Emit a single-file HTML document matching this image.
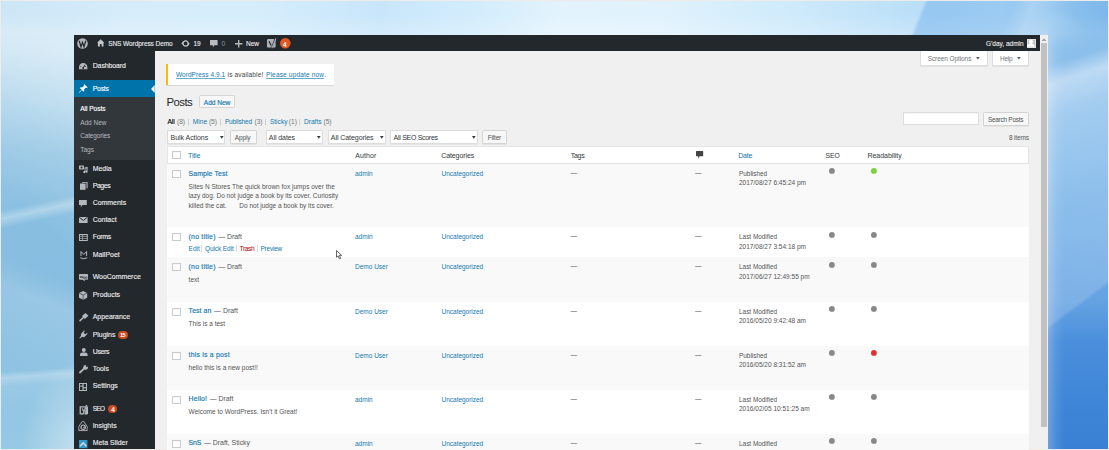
<!DOCTYPE html>
<html><head><meta charset="utf-8"><style>
html,body{margin:0;padding:0;}
body{width:1109px;height:450px;position:relative;overflow:hidden;font-family:"Liberation Sans",sans-serif;background:#efebe8;}
.t{position:absolute;white-space:pre;line-height:1;}
.r{position:absolute;box-sizing:border-box;}
#bg{left:1px;top:1px;width:1107px;height:448px;background:
 radial-gradient(40px 45px at 1052px 50px, rgba(255,255,255,.28), rgba(255,255,255,0)),
 linear-gradient(112deg, rgba(255,255,255,0) 0px, rgba(255,255,255,0) 940px, rgba(255,255,255,.22) 958px, rgba(255,255,255,.05) 985px, rgba(255,255,255,0) 1000px),
 linear-gradient(112deg, rgba(70,150,225,0) 0px, rgba(70,150,225,0) 856px, rgba(70,150,225,.3) 860px, rgba(70,150,225,.3) 1109px),
 linear-gradient(180deg, rgba(255,255,255,0) 0px, rgba(255,255,255,0) 12px, rgba(255,255,255,.2) 32px, rgba(255,255,255,0) 55px),
 linear-gradient(90deg,#cde6f6 0px,#d0e8f8 60px,#d6ecfa 120px,#d6edfb 250px,#c8e6fb 380px,#d2ecfc 470px,#e2f3fd 560px,#e0f2fd 660px,#d0ebfb 780px,#c0e2f9 880px,#b8ddf8 930px,#c0e1f9 1000px,#b0d8f5 1050px,#94c6ee 1109px);}
#bgL{left:1px;top:1px;width:73px;height:448px;-webkit-mask-image:linear-gradient(180deg, transparent 0px, transparent 22px, #000 48px);background:
 linear-gradient(168deg, rgba(255,255,255,0) 0px, rgba(255,255,255,0) 205px, rgba(255,255,255,.32) 213px, rgba(255,255,255,0) 223px),
 linear-gradient(176deg, rgba(255,255,255,0) 0px, rgba(255,255,255,0) 370px, rgba(255,255,255,.28) 376px, rgba(255,255,255,.08) 385px, rgba(255,255,255,0) 413px),
 radial-gradient(60px 90px at 80px 448px, rgba(255,255,255,.45), rgba(255,255,255,0)),
 linear-gradient(200deg, rgba(255,255,255,0) 0px, rgba(255,255,255,0) 263px, rgba(255,255,255,.14) 293px, rgba(255,255,255,0) 363px),
 linear-gradient(180deg,#d3e9f7 0px,#d0e7f5 33px,#b4d8ed 93px,#98c8e5 153px,#88bfe1 213px,#86bde0 283px,#8dc2e2 353px,#96c9e4 448px);}
#bgL2{left:1px;top:22px;width:73px;height:427px;background:linear-gradient(225deg, rgba(255,255,255,.4) 0px, rgba(255,255,255,.12) 100px, rgba(255,255,255,0) 170px);-webkit-mask-image:linear-gradient(180deg, transparent 0px, #000 30px);}
#bgR{left:1048px;top:1px;width:60px;height:448px;-webkit-mask-image:linear-gradient(180deg, rgba(0,0,0,.0) 0px, rgba(0,0,0,.0) 18px, #000 50px);background:
 linear-gradient(90deg, rgba(255,255,255,.25) 0px, rgba(255,255,255,.08) 8px, rgba(255,255,255,0) 16px),
 linear-gradient(162deg, rgba(255,255,255,0) 0px, rgba(255,255,255,0) 62px, rgba(255,255,255,.42) 80px, rgba(255,255,255,.18) 112px, rgba(255,255,255,.08) 150px, rgba(255,255,255,0) 200px),
 linear-gradient(143deg, rgba(255,255,255,.10) 0px, rgba(255,255,255,.16) 259px, rgba(255,255,255,0) 263px),
 linear-gradient(180deg,#7ab4e8 0px,#7db7e9 40px,#80b9ea 150px,#74afe7 230px,#64a2e2 300px,#4b8fdc 340px,#3f86d8 400px,#3a81d5 448px);}
</style></head><body>
<div class="r" id="bg"></div><div class="r" id="bgL"></div><div class="r" id="bgR"></div><div class="r" id="bgL2"></div>
<div class="r" style="left:74.00px;top:35.00px;width:966.00px;height:413.70px;background:#f0f0f0"></div>
<div class="r" style="left:1040.00px;top:35.00px;width:8.00px;height:413.70px;background:#f0f0f0"></div>
<div class="r" style="left:1041.20px;top:43.00px;width:5.60px;height:383.70px;background:#c1c1c1"></div>
<svg class="r" style="left:1040px;top:36px" width="8" height="7"><path d="M1.5 5 L4 2.3 L6.5 5 Z" fill="#a3a3a3"/></svg>
<div class="r" style="left:74.00px;top:35.00px;width:966.00px;height:15.70px;background:#23282d"></div>
<div class="r" style="left:74.00px;top:50.70px;width:80.70px;height:398.00px;background:#23282d"></div>
<svg class="r" style="left:77.00px;top:37.60px;overflow:visible" width="11" height="11" viewBox="0 0 11 11"><circle cx="5.5" cy="5.5" r="5.3" fill="#b3b7bb"/><path d="M2.2 2.8 L4.0 8.7 L5.5 4.4 L7.0 8.7 L8.8 2.8" fill="none" stroke="#23282d" stroke-width="1.2"/></svg>
<svg class="r" style="left:96.60px;top:39.30px;overflow:visible" width="7.4" height="7.6" viewBox="0 0 7.4 7.6"><path d="M3.7 0.3 L7.4 3.8 L6.5 3.8 L6.5 7.6 L4.5 7.6 L4.5 5.2 L2.9 5.2 L2.9 7.6 L0.9 7.6 L0.9 3.8 L0 3.8 Z" fill="#c3c7cb"/><rect x="3.1" y="5" width="1.2" height="2.6" fill="#23282d"/></svg>
<div class="t" style="left:108.20px;top:40.80px;font-size:6.500px;color:#eeeeee;letter-spacing:-0.066px;-webkit-text-stroke:0.1px #eee;">SNS Wordpress Demo</div>
<svg class="r" style="left:181.00px;top:40.30px;overflow:visible" width="9.2" height="7" viewBox="0 0 9.2 7"><circle cx="4.6" cy="3.5" r="2.6" fill="none" stroke="#c3c7cb" stroke-width="1.3"/><path d="M0.4 3.5 L2 1.6 L2.2 4.6Z M8.8 3.5 L7.2 5.4 L7 2.4Z" fill="#c3c7cb"/></svg>
<div class="t" style="left:193.50px;top:40.80px;font-size:6.500px;color:#eeeeee;letter-spacing:-0.230px;-webkit-text-stroke:0.1px #eee;">19</div>
<svg class="r" style="left:209.70px;top:40.20px;overflow:visible" width="7.6" height="7.4" viewBox="0 0 7.6 7.4"><path d="M0 0.3 Q0 0 0.3 0 L7.3 0 Q7.6 0 7.6 0.3 L7.6 4.9 Q7.6 5.2 7.3 5.2 L4.3 5.2 L2.9 7.4 L2.8 5.2 L0.3 5.2 Q0 5.2 0 4.9Z" fill="#b9bdc1"/></svg>
<div class="t" style="left:221.60px;top:40.80px;font-size:6.500px;color:#8f9499;">0</div>
<svg class="r" style="left:234.60px;top:40.40px;overflow:visible" width="7.4" height="7.4" viewBox="0 0 7.4 7.4"><path d="M3 0 H4.4 V3 H7.4 V4.4 H4.4 V7.4 H3 V4.4 H0 V3 H3Z" fill="#b3b8bd"/></svg>
<div class="t" style="left:246.00px;top:40.80px;font-size:6.500px;color:#eeeeee;-webkit-text-stroke:0.1px #eee;">New</div>
<svg class="r" style="left:267.00px;top:37.80px;overflow:visible" width="9.4" height="10.4" viewBox="0 0 9.4 10.4"><rect x="0" y="1" width="8.6" height="8.6" rx="1.2" fill="#aeb2b6"/><path d="M2 3.2 L4.1 7.6 M8.4 0.2 L4.4 10.2" stroke="#23282d" stroke-width="1.2" fill="none"/><path d="M8.6 0 L9.4 0.4 L5.2 10.4 L4.4 10" fill="#aeb2b6"/></svg>
<svg class="r" style="left:279.60px;top:38.20px;overflow:visible" width="10.6" height="10.6" viewBox="0 0 10.6 10.6"><circle cx="5.3" cy="5.3" r="5.3" fill="#e2571f"/></svg>
<div class="t" style="left:283.10px;top:41.97px;font-size:6.300px;color:#ffffff;font-weight:700;">4</div>
<div class="t" style="left:985.90px;top:40.80px;font-size:6.500px;color:#eeeeee;letter-spacing:-0.010px;-webkit-text-stroke:0.1px #eee;">G’day, admin</div>
<div class="r" style="left:1026.70px;top:38.70px;width:9.30px;height:9.10px;background:#c2c4c6;border:0.8px solid #e2e2e2"></div>
<svg class="r" style="left:1027.40px;top:39.40px;overflow:visible" width="7.9" height="7.7" viewBox="0 0 7.9 7.7"><circle cx="3.95" cy="2.8" r="2.1" fill="#fff"/><path d="M0.3 7.7 Q0.5 4.6 3.95 4.5 Q7.4 4.6 7.6 7.7Z" fill="#fff"/></svg>
<div class="t" style="left:92.70px;top:63.17px;font-size:6.950px;color:#eeeeee;letter-spacing:-0.088px;-webkit-text-stroke:0.12px #eeeeee;">Dashboard</div>
<svg class="r" style="left:79.00px;top:62.90px;overflow:visible" width="8.4" height="6.2" viewBox="0 0 8.4 6.2"><path d="M4.2 0 A4.2 4.2 0 0 1 8.4 4.2 L8.4 6.2 L0 6.2 L0 4.2 A4.2 4.2 0 0 1 4.2 0Z" fill="#b3b8bd"/><path d="M4.2 5 L6 1.8" stroke="#23282d" stroke-width="1"/><circle cx="4.2" cy="5" r="1" fill="#23282d"/><circle cx="1.8" cy="3.6" r=".5" fill="#23282d"/><circle cx="6.6" cy="3.6" r=".5" fill="#23282d"/></svg>
<div class="r" style="left:74.00px;top:80.10px;width:80.70px;height:17.10px;background:#0073aa"></div>
<svg class="r" style="left:151.10px;top:84.70px;overflow:visible" width="3.7" height="8" viewBox="0 0 3.7 8"><path d="M3.7 0 L0 4 L3.7 8Z" fill="#f1f1f1"/></svg>
<div class="t" style="left:92.70px;top:86.17px;font-size:6.950px;color:#ffffff;letter-spacing:-0.270px;-webkit-text-stroke:0.12px #ffffff;">Posts</div>
<svg class="r" style="left:78.70px;top:84.30px;overflow:visible" width="8.6" height="8.7" viewBox="0 0 8.6 8.7"><path d="M5.2 0 L8.6 3.4 L7.6 3.9 L6.9 3.5 L5 5.4 L5.3 7 L4.6 7.7 L2.9 6 L0.5 8.7 L0 8.2 L2.6 5.7 L0.9 4 L1.6 3.3 L3.2 3.6 L5.1 1.7 L4.7 1Z" fill="#ffffff"/></svg>
<div class="r" style="left:74.00px;top:97.20px;width:80.70px;height:62.80px;background:#32373c"></div>
<div class="t" style="left:80.20px;top:106.11px;font-size:6.600px;color:#ffffff;letter-spacing:-0.047px;-webkit-text-stroke:0.16px #ffffff;">All Posts</div>
<div class="t" style="left:80.20px;top:119.80px;font-size:6.500px;color:#b4b9be;letter-spacing:-0.012px;">Add New</div>
<div class="t" style="left:80.20px;top:133.10px;font-size:6.500px;color:#b4b9be;letter-spacing:-0.148px;">Categories</div>
<div class="t" style="left:80.20px;top:146.76px;font-size:6.550px;color:#b4b9be;">Tags</div>
<div class="t" style="left:92.70px;top:165.67px;font-size:6.950px;color:#eeeeee;-webkit-text-stroke:0.12px #eeeeee;">Media</div>
<svg class="r" style="left:79.00px;top:165.20px;overflow:visible" width="8.6" height="7.8" viewBox="0 0 8.6 7.8"><rect x="0" y="0.4" width="5" height="4" rx=".6" fill="#b3b8bd"/><circle cx="2.5" cy="2.4" r="1" fill="#23282d"/><path d="M5.6 2.5 L8.6 1.8 L8.6 6.6 A1.1 1.1 0 1 1 7.6 5.6 L7.6 3.4 L6.4 3.7 L6.4 7 A1.1 1.1 0 1 1 5.6 6" fill="#b3b8bd"/></svg>
<div class="t" style="left:92.70px;top:182.84px;font-size:6.950px;color:#eeeeee;letter-spacing:-0.402px;-webkit-text-stroke:0.12px #eeeeee;">Pages</div>
<svg class="r" style="left:79.50px;top:182.27px;overflow:visible" width="7.6" height="7.8" viewBox="0 0 7.6 7.8"><rect x="2" y="0" width="5.6" height="6.3" fill="#b3b8bd"/><rect x="0.9" y="0.8" width="5.6" height="6.3" fill="#23282d"/><rect x="0" y="1.5" width="5.6" height="6.3" fill="#b3b8bd"/></svg>
<div class="t" style="left:92.70px;top:200.01px;font-size:6.950px;color:#eeeeee;-webkit-text-stroke:0.12px #eeeeee;">Comments</div>
<svg class="r" style="left:79.40px;top:199.54px;overflow:visible" width="7.8" height="7.6" viewBox="0 0 7.8 7.6"><path d="M0 0 H7.8 V5 H3.4 L1.8 7.6 L1.9 5 H0Z" fill="#b3b8bd"/></svg>
<div class="t" style="left:92.70px;top:217.18px;font-size:6.950px;color:#eeeeee;-webkit-text-stroke:0.12px #eeeeee;">Contact</div>
<svg class="r" style="left:79.00px;top:217.41px;overflow:visible" width="8.6" height="6" viewBox="0 0 8.6 6"><rect x="0" y="0" width="8.6" height="6" fill="#b3b8bd"/><path d="M0.3 0.4 L4.3 3.4 L8.3 0.4" fill="none" stroke="#23282d" stroke-width=".9"/></svg>
<div class="t" style="left:92.70px;top:234.35px;font-size:6.950px;color:#eeeeee;letter-spacing:-0.272px;-webkit-text-stroke:0.12px #eeeeee;">Forms</div>
<svg class="r" style="left:79.00px;top:234.18px;overflow:visible" width="8.8" height="7" viewBox="0 0 8.8 7"><rect x="0" y="0" width="8.8" height="7" fill="#b3b8bd"/><rect x="1" y="1.2" width="2.2" height="1.2" fill="#23282d"/><rect x="3.8" y="1.2" width="4" height="1.2" fill="#23282d"/><rect x="1" y="3" width="2.2" height="1.2" fill="#23282d"/><rect x="3.8" y="3" width="4" height="1.2" fill="#23282d"/><rect x="1" y="4.8" width="2.2" height="1.2" fill="#23282d"/><rect x="3.8" y="4.8" width="4" height="1.2" fill="#23282d"/></svg>
<div class="t" style="left:92.70px;top:251.52px;font-size:6.950px;color:#eeeeee;-webkit-text-stroke:0.12px #eeeeee;">MailPoet</div>
<svg class="r" style="left:79.60px;top:250.75px;overflow:visible" width="7.6" height="8.6" viewBox="0 0 7.6 8.6"><path d="M1 5 V0.5 L3.8 3.5 L6.6 0.5 V5" fill="none" stroke="#b3b8bd" stroke-width="1"/><path d="M0.3 6.8 Q3.8 8.8 7.3 6.8" fill="none" stroke="#b3b8bd" stroke-width="1"/></svg>
<div class="t" style="left:92.70px;top:274.39px;font-size:6.950px;color:#eeeeee;-webkit-text-stroke:0.12px #eeeeee;">WooCommerce</div>
<svg class="r" style="left:79.00px;top:273.82px;overflow:visible" width="9" height="7.6" viewBox="0 0 9 7.6"><path d="M0.8 0 H8.2 Q9 0 9 0.8 V5 Q9 5.8 8.2 5.8 H5.4 L6 7.6 L3.6 5.8 H0.8 Q0 5.8 0 5 V0.8 Q0 0 0.8 0Z" fill="#b3b8bd"/><path d="M1.2 2 L1.8 4 L2.6 2.4 L3.4 4 L4 2 M5.2 3 A.8 .9 0 1 0 5.21 3 M7.3 3 A.8 .9 0 1 0 7.31 3" fill="none" stroke="#23282d" stroke-width=".6"/></svg>
<div class="t" style="left:92.70px;top:291.56px;font-size:6.950px;color:#eeeeee;-webkit-text-stroke:0.12px #eeeeee;">Products</div>
<svg class="r" style="left:79.40px;top:290.59px;overflow:visible" width="8.2" height="8.8" viewBox="0 0 8.2 8.8"><path d="M4.1 0 L8.2 2 L8.2 6.8 L4.1 8.8 L0 6.8 L0 2Z" fill="#b3b8bd"/><path d="M0 2 L4.1 4 L8.2 2 M4.1 4 V8.8" fill="none" stroke="#23282d" stroke-width=".6"/></svg>
<div class="t" style="left:92.70px;top:314.43px;font-size:6.950px;color:#eeeeee;-webkit-text-stroke:0.12px #eeeeee;">Appearance</div>
<svg class="r" style="left:79.00px;top:313.16px;overflow:visible" width="9.4" height="8.6" viewBox="0 0 9.4 8.6"><path d="M2.9 3.0 L6.5 0 L9.4 2.7 L5.9 5.9Z" fill="#b3b8bd"/><path d="M4.9 4.0 L1.0 7.7" stroke="#b3b8bd" stroke-width="1.6" stroke-linecap="round"/></svg>
<div class="t" style="left:92.70px;top:331.60px;font-size:6.950px;color:#eeeeee;-webkit-text-stroke:0.12px #eeeeee;">Plugins</div>
<svg class="r" style="left:79.20px;top:330.33px;overflow:visible" width="9" height="9" viewBox="0 0 9 9"><path d="M5.2 1.0 L3.8 2.6 M8.0 3.6 L6.4 5.0" stroke="#b3b8bd" stroke-width="1.1" stroke-linecap="round"/><path d="M2.6 3.2 L3.9 2.0 L7.2 5.3 L6.0 6.6 Q4.6 7.6 3.2 6.8 L1.0 8.6 L0.3 7.9 L2.0 5.7 Q1.4 4.4 2.6 3.2Z" fill="#b3b8bd"/></svg>
<div class="t" style="left:92.70px;top:348.77px;font-size:6.950px;color:#eeeeee;letter-spacing:-0.312px;-webkit-text-stroke:0.12px #eeeeee;">Users</div>
<svg class="r" style="left:79.60px;top:347.90px;overflow:visible" width="7.6" height="8" viewBox="0 0 7.6 8"><circle cx="3.8" cy="2" r="2" fill="#b3b8bd"/><path d="M0 8 V6.6 Q0 4.4 2.6 4.4 H5 Q7.6 4.4 7.6 6.6 V8Z" fill="#b3b8bd"/></svg>
<div class="t" style="left:92.70px;top:365.94px;font-size:6.950px;color:#eeeeee;-webkit-text-stroke:0.12px #eeeeee;">Tools</div>
<svg class="r" style="left:79.00px;top:364.87px;overflow:visible" width="9.4" height="8.6" viewBox="0 0 9.4 8.6"><path d="M0.9 7.5 L5.6 3.2" stroke="#b3b8bd" stroke-width="1.8" stroke-linecap="round"/><circle cx="6.6" cy="2.4" r="2.4" fill="#b3b8bd"/><circle cx="7.9" cy="1.0" r="1.1" fill="#23282d"/></svg>
<div class="t" style="left:92.70px;top:383.11px;font-size:6.950px;color:#eeeeee;-webkit-text-stroke:0.12px #eeeeee;">Settings</div>
<svg class="r" style="left:79.40px;top:382.64px;overflow:visible" width="8" height="8" viewBox="0 0 8 8"><rect x="0" y="0" width="8" height="8" fill="#b3b8bd"/><rect x="1" y="1" width="2.4" height="1.6" fill="#23282d"/><rect x="1" y="3.6" width="2.4" height="3.4" fill="#23282d"/><rect x="4.6" y="1" width="2.4" height="3.2" fill="#23282d"/><rect x="4.6" y="5.4" width="2.4" height="1.6" fill="#23282d"/></svg>
<div class="t" style="left:92.70px;top:406.37px;font-size:6.487px;color:#eeeeee;letter-spacing:-0.600px;-webkit-text-stroke:0.12px #eeeeee;">SEO</div>
<svg class="r" style="left:79.00px;top:404.71px;overflow:visible" width="9" height="9.4" viewBox="0 0 9 9.4"><path d="M0.6 1.2 H6.4 L5.8 2.5 H1.9 V8.2 H4.2 L3.7 9.4 H0.6 Z" fill="#b3b8bd"/><path d="M7.5 1.4 H9 V8.2 Q9 9.4 7.8 9.4 H5.3 Z" fill="#b3b8bd"/><path d="M6.9 0 L8.4 0 L4.5 9.4 L3.1 9.4 Z" fill="#b3b8bd"/><path d="M2.7 3.3 L3.9 3.3 L4.9 5.8 L4.2 7.3Z" fill="#b3b8bd"/></svg>
<div class="t" style="left:92.70px;top:423.15px;font-size:6.950px;color:#eeeeee;-webkit-text-stroke:0.12px #eeeeee;">Insights</div>
<svg class="r" style="left:78.40px;top:420.88px;overflow:visible" width="10" height="10.2" viewBox="0 0 10 10.2"><path d="M4.2 0.6 L1.0 5.2 Q0.2 6.8 1.0 8.0 L0.8 9.6 L9.2 9.6 L9.0 8.0 Q9.8 6.6 8.8 5.0 L5.8 0.6 Q5 0 4.2 0.6Z" fill="none" stroke="#b3b8bd" stroke-width="0.9"/><circle cx="5.2" cy="6.2" r="2.2" fill="none" stroke="#b3b8bd" stroke-width="1.2"/><path d="M5.2 6.2 H7.2" stroke="#b3b8bd" stroke-width="1"/></svg>
<div class="t" style="left:92.70px;top:440.32px;font-size:6.950px;color:#eeeeee;-webkit-text-stroke:0.12px #eeeeee;">Meta Slider</div>
<svg class="r" style="left:79.20px;top:439.75px;overflow:visible" width="8.4" height="8.2" viewBox="0 0 8.4 8.2"><rect x="0" y="0" width="8.4" height="8.2" fill="#3597c6"/><path d="M1.0 6.2 L4.2 2.9 L7.4 6.2" fill="none" stroke="#c9dbe6" stroke-width="1.5"/></svg>
<div class="r" style="left:117.80px;top:330.60px;width:10.60px;height:8.80px;background:#ca4a1f;border-radius:5px"></div>
<div class="t" style="left:120.00px;top:333.21px;font-size:5.664px;color:#fff;letter-spacing:-0.600px;font-weight:700;">15</div>
<div class="r" style="left:108.40px;top:405.10px;width:8.50px;height:8.20px;background:#ca4a1f;border-radius:5px"></div>
<div class="t" style="left:111.20px;top:406.80px;font-size:6.500px;color:#fff;font-weight:700;">4</div>
<div class="r" style="left:919.60px;top:50.70px;width:68.00px;height:15.30px;background:#fff;border:0.5px solid #ddd;border-top:0;box-shadow:0 0.5px 0.5px rgba(0,0,0,.05)"></div>
<div class="t" style="left:927.70px;top:56.00px;font-size:6.500px;color:#72777c;letter-spacing:-0.085px;">Screen Options</div>
<svg class="r" style="left:976.20px;top:57.20px;overflow:visible" width="3.8" height="2.6" viewBox="0 0 3.8 2.6"><path d="M0 0 H3.8 L1.9 2.6Z" fill="#555d66"/></svg>
<div class="r" style="left:991.50px;top:50.70px;width:37.70px;height:15.30px;background:#fff;border:0.5px solid #ddd;border-top:0;box-shadow:0 0.5px 0.5px rgba(0,0,0,.05)"></div>
<div class="t" style="left:1000.00px;top:56.00px;font-size:6.500px;color:#72777c;letter-spacing:-0.289px;">Help</div>
<svg class="r" style="left:1017.40px;top:57.20px;overflow:visible" width="3.8" height="2.6" viewBox="0 0 3.8 2.6"><path d="M0 0 H3.8 L1.9 2.6Z" fill="#555d66"/></svg>
<div class="r" style="left:166.10px;top:63.90px;width:167.90px;height:21.10px;background:#fff;border-left:2px solid #ffb900;box-shadow:0 0.5px 0.5px rgba(0,0,0,.1)"></div>
<div class="t" style="left:175.90px;top:71.70px;font-size:6.500px;color:#1479b0;letter-spacing:0.072px;text-decoration:underline;text-decoration-thickness:0.6px;text-underline-offset:0.5px;text-decoration-skip-ink:none;text-decoration-color:rgba(0,115,170,.6);">WordPress 4.9.1</div>
<div class="t" style="left:227.60px;top:71.70px;font-size:6.500px;color:#444;letter-spacing:0.136px;">is available!</div>
<div class="t" style="left:266.00px;top:71.70px;font-size:6.500px;color:#1479b0;letter-spacing:0.169px;text-decoration:underline;text-decoration-thickness:0.6px;text-underline-offset:0.5px;text-decoration-skip-ink:none;text-decoration-color:rgba(0,115,170,.6);">Please update now</div>
<div class="t" style="left:324.60px;top:71.61px;font-size:6.600px;color:#444;">.</div>
<div class="t" style="left:166.60px;top:97.05px;font-size:11.396px;color:#23282d;letter-spacing:-0.600px;">Posts</div>
<div class="r" style="left:199.20px;top:95.20px;width:36.30px;height:13.20px;background:#f7f7f7;border:0.6px solid #d5d5d5;border-radius:1.5px"></div>
<div class="t" style="left:203.80px;top:99.71px;font-size:6.600px;color:#1479b0;letter-spacing:-0.030px;-webkit-text-stroke:0.16px #1479b0;">Add New</div>
<div class="t" style="left:167.40px;top:118.83px;font-size:6.700px;color:#000;-webkit-text-stroke:0.16px #000;">All</div>
<div class="t" style="left:177.00px;top:118.91px;font-size:6.600px;color:#72777c;">(8)</div>
<div class="r" style="left:187.70px;top:118.60px;width:0.65px;height:6.80px;background:#cfcfcf"></div>
<div class="r" style="left:219.70px;top:118.60px;width:0.65px;height:6.80px;background:#cfcfcf"></div>
<div class="r" style="left:265.10px;top:118.60px;width:0.65px;height:6.80px;background:#cfcfcf"></div>
<div class="r" style="left:299.20px;top:118.60px;width:0.65px;height:6.80px;background:#cfcfcf"></div>
<div class="t" style="left:192.80px;top:118.91px;font-size:6.600px;color:#1479b0;">Mine</div>
<div class="t" style="left:208.90px;top:118.91px;font-size:6.600px;color:#72777c;">(5)</div>
<div class="t" style="left:224.90px;top:119.00px;font-size:6.500px;color:#1479b0;letter-spacing:-0.181px;">Published</div>
<div class="t" style="left:254.50px;top:118.91px;font-size:6.600px;color:#72777c;">(3)</div>
<div class="t" style="left:269.90px;top:118.91px;font-size:6.600px;color:#1479b0;">Sticky</div>
<div class="t" style="left:288.80px;top:118.91px;font-size:6.600px;color:#72777c;">(1)</div>
<div class="t" style="left:304.00px;top:118.91px;font-size:6.600px;color:#1479b0;">Drafts</div>
<div class="t" style="left:323.50px;top:118.91px;font-size:6.600px;color:#72777c;">(5)</div>
<div class="r" style="left:902.80px;top:111.90px;width:76.40px;height:13.40px;background:#fff;border:0.5px solid #ddd;box-shadow:inset 0 0.5px 1px rgba(0,0,0,.07)"></div>
<div class="r" style="left:982.50px;top:111.60px;width:46.90px;height:14.20px;background:#f7f7f7;border:0.6px solid #d4d4d4;border-radius:1.5px;box-shadow:0 0.5px 0 #d8d8d8"></div>
<div class="t" style="left:987.90px;top:116.80px;font-size:6.500px;color:#555;letter-spacing:-0.278px;">Search Posts</div>
<div class="t" style="left:1008.90px;top:134.80px;font-size:6.500px;color:#555;letter-spacing:-0.158px;">8 items</div>
<div class="r" style="left:167.30px;top:130.30px;width:58.00px;height:13.30px;background:#fff;border:0.5px solid #ddd;box-shadow:0 0.5px 0.5px rgba(0,0,0,.04)"></div>
<div class="t" style="left:170.60px;top:134.17px;font-size:7.000px;color:#32373c;letter-spacing:-0.048px;">Bulk Actions</div>
<svg class="r" style="left:219.60px;top:135.60px;overflow:visible" width="3.6" height="2.8" viewBox="0 0 3.6 2.8"><path d="M0 0 H3.6 L1.8 2.8Z" fill="#32373c"/></svg>
<div class="r" style="left:229.50px;top:130.30px;width:27.10px;height:13.70px;background:#f7f7f7;border:0.6px solid #d4d4d4;border-radius:1.5px;box-shadow:0 0.5px 0 #d8d8d8"></div>
<div class="t" style="left:234.70px;top:134.80px;font-size:6.500px;color:#555;letter-spacing:-0.115px;">Apply</div>
<div class="r" style="left:265.50px;top:130.30px;width:57.60px;height:13.30px;background:#fff;border:0.5px solid #ddd;box-shadow:0 0.5px 0.5px rgba(0,0,0,.04)"></div>
<div class="t" style="left:268.80px;top:134.17px;font-size:7.000px;color:#32373c;letter-spacing:-0.069px;">All dates</div>
<svg class="r" style="left:317.20px;top:135.60px;overflow:visible" width="3.6" height="2.8" viewBox="0 0 3.6 2.8"><path d="M0 0 H3.6 L1.8 2.8Z" fill="#32373c"/></svg>
<div class="r" style="left:327.60px;top:130.30px;width:58.80px;height:13.30px;background:#fff;border:0.5px solid #ddd;box-shadow:0 0.5px 0.5px rgba(0,0,0,.04)"></div>
<div class="t" style="left:330.80px;top:134.17px;font-size:7.000px;color:#32373c;letter-spacing:-0.060px;">All Categories</div>
<svg class="r" style="left:380.10px;top:135.60px;overflow:visible" width="3.6" height="2.8" viewBox="0 0 3.6 2.8"><path d="M0 0 H3.6 L1.8 2.8Z" fill="#32373c"/></svg>
<div class="r" style="left:390.30px;top:130.30px;width:88.00px;height:13.30px;background:#fff;border:0.5px solid #ddd;box-shadow:0 0.5px 0.5px rgba(0,0,0,.04)"></div>
<div class="t" style="left:393.60px;top:134.17px;font-size:7.000px;color:#32373c;letter-spacing:-0.295px;">All SEO Scores</div>
<svg class="r" style="left:472.40px;top:135.60px;overflow:visible" width="3.6" height="2.8" viewBox="0 0 3.6 2.8"><path d="M0 0 H3.6 L1.8 2.8Z" fill="#32373c"/></svg>
<div class="r" style="left:482.00px;top:130.30px;width:24.70px;height:13.70px;background:#f7f7f7;border:0.6px solid #d4d4d4;border-radius:1.5px;box-shadow:0 0.5px 0 #d8d8d8"></div>
<div class="t" style="left:487.70px;top:134.80px;font-size:6.500px;color:#555;letter-spacing:-0.169px;">Filter</div>
<div class="r" style="left:166.70px;top:145.80px;width:862.70px;height:314.20px;background:#fff;border:0.6px solid #e5e5e5;box-shadow:0 0.5px 0.5px rgba(0,0,0,.04)"></div>
<div class="r" style="left:167.30px;top:162.90px;width:861.50px;height:0.90px;background:#e1e1e1"></div>
<div class="r" style="left:172.20px;top:151.20px;width:8.60px;height:8.30px;background:#fff;border:0.8px solid #c9cccf;box-shadow:inset 0 0.5px 1px rgba(0,0,0,.06)"></div>
<div class="t" style="left:188.00px;top:151.77px;font-size:7.000px;color:#1479b0;letter-spacing:-0.141px;">Title</div>
<div class="t" style="left:355.20px;top:151.77px;font-size:7.000px;color:#32373c;letter-spacing:0.095px;">Author</div>
<div class="t" style="left:441.20px;top:151.77px;font-size:7.000px;color:#32373c;letter-spacing:-0.095px;">Categories</div>
<div class="t" style="left:570.80px;top:151.77px;font-size:7.000px;color:#32373c;letter-spacing:-0.295px;">Tags</div>
<svg class="r" style="left:695.60px;top:151.20px;overflow:visible" width="7.2" height="7.8" viewBox="0 0 7.2 7.8"><path d="M0 0.4 Q0 0 .4 0 H6.8 Q7.2 0 7.2 .4 V4.8 Q7.2 5.2 6.8 5.2 H3.6 L2.4 7.8 L2.2 5.2 H.4 Q0 5.2 0 4.8Z" fill="#444"/></svg>
<div class="t" style="left:738.20px;top:151.77px;font-size:7.000px;color:#1479b0;letter-spacing:-0.162px;">Date</div>
<div class="t" style="left:825.50px;top:152.59px;font-size:6.750px;color:#32373c;">SEO</div>
<div class="t" style="left:867.50px;top:151.77px;font-size:7.000px;color:#32373c;letter-spacing:-0.043px;">Readability</div>
<div class="r" style="left:167.30px;top:163.80px;width:861.50px;height:63.30px;background:#f9f9f9"></div>
<div class="r" style="left:167.30px;top:227.10px;width:861.50px;height:30.00px;background:#ffffff"></div>
<div class="r" style="left:167.30px;top:257.10px;width:861.50px;height:44.70px;background:#f9f9f9"></div>
<div class="r" style="left:167.30px;top:301.80px;width:861.50px;height:44.00px;background:#ffffff"></div>
<div class="r" style="left:167.30px;top:345.80px;width:861.50px;height:43.90px;background:#f9f9f9"></div>
<div class="r" style="left:167.30px;top:389.70px;width:861.50px;height:44.00px;background:#ffffff"></div>
<div class="r" style="left:167.30px;top:433.70px;width:861.50px;height:26.30px;background:#f9f9f9"></div>
<div class="r" style="left:172.20px;top:169.90px;width:8.60px;height:8.30px;background:#fff;border:0.8px solid #c9cccf;box-shadow:inset 0 0.5px 1px rgba(0,0,0,.06)"></div>
<div class="t" style="left:188.60px;top:170.76px;font-size:6.900px;color:#1479b0;letter-spacing:0.096px;-webkit-text-stroke:0.16px #1479b0;">Sample Test</div>
<div class="t" style="left:188.60px;top:183.68px;font-size:6.520px;color:#555;">Sites N Stores The quick brown fox jumps over the</div>
<div class="t" style="left:188.60px;top:193.43px;font-size:6.520px;color:#555;">lazy dog. Do not judge a book by its cover. Curiosity</div>
<div class="t" style="left:188.60px;top:203.18px;font-size:6.520px;color:#555;">killed the cat.       Do not judge a book by its cover.</div>
<div class="t" style="left:355.00px;top:171.10px;font-size:6.500px;color:#1479b0;">admin</div>
<div class="t" style="left:441.60px;top:171.10px;font-size:6.500px;color:#1479b0;letter-spacing:-0.026px;">Uncategorized</div>
<div class="t" style="left:570.50px;top:169.90px;font-size:6.500px;color:#555;">—</div>
<div class="t" style="left:694.90px;top:169.90px;font-size:6.500px;color:#555;">—</div>
<div class="t" style="left:739.00px;top:171.17px;font-size:6.420px;color:#555;">Published</div>
<div class="t" style="left:739.00px;top:180.47px;font-size:6.530px;color:#555;">2017/08/27 6:45:24 pm</div>
<svg class="r" style="left:828.50px;top:168.30px;overflow:visible" width="5.8" height="5.8" viewBox="0 0 5.8 5.8"><circle cx="2.9" cy="2.9" r="2.9" fill="#888"/></svg>
<svg class="r" style="left:870.70px;top:168.30px;overflow:visible" width="5.8" height="5.8" viewBox="0 0 5.8 5.8"><circle cx="2.9" cy="2.9" r="2.9" fill="#7ad03a"/></svg>
<div class="r" style="left:172.20px;top:233.20px;width:8.60px;height:8.30px;background:#fff;border:0.8px solid #c9cccf;box-shadow:inset 0 0.5px 1px rgba(0,0,0,.06)"></div>
<div class="t" style="left:188.60px;top:234.06px;font-size:6.900px;color:#1479b0;letter-spacing:0.219px;-webkit-text-stroke:0.16px #1479b0;">(no title)</div>
<div class="t" style="left:216.30px;top:234.06px;font-size:6.900px;color:#555;"> — Draft</div>
<div class="t" style="left:188.60px;top:246.40px;font-size:6.500px;color:#1479b0;">Edit</div>
<div class="r" style="left:201.30px;top:245.00px;width:0.60px;height:7.40px;background:#dcdcdc"></div>
<div class="t" style="left:205.00px;top:246.40px;font-size:6.500px;color:#1479b0;letter-spacing:-0.091px;">Quick Edit</div>
<div class="r" style="left:236.00px;top:245.00px;width:0.60px;height:7.40px;background:#dcdcdc"></div>
<div class="t" style="left:239.60px;top:246.40px;font-size:6.500px;color:#a00;letter-spacing:-0.368px;">Trash</div>
<div class="r" style="left:257.20px;top:245.00px;width:0.60px;height:7.40px;background:#dcdcdc"></div>
<div class="t" style="left:260.50px;top:246.40px;font-size:6.500px;color:#1479b0;letter-spacing:-0.220px;">Preview</div>
<div class="t" style="left:355.00px;top:234.40px;font-size:6.500px;color:#1479b0;">admin</div>
<div class="t" style="left:441.60px;top:234.40px;font-size:6.500px;color:#1479b0;letter-spacing:-0.026px;">Uncategorized</div>
<div class="t" style="left:570.50px;top:233.20px;font-size:6.500px;color:#555;">—</div>
<div class="t" style="left:694.90px;top:233.20px;font-size:6.500px;color:#555;">—</div>
<div class="t" style="left:739.00px;top:234.47px;font-size:6.420px;color:#555;">Last Modified</div>
<div class="t" style="left:739.00px;top:243.77px;font-size:6.530px;color:#555;">2017/08/27 3:54:18 pm</div>
<svg class="r" style="left:828.50px;top:231.60px;overflow:visible" width="5.8" height="5.8" viewBox="0 0 5.8 5.8"><circle cx="2.9" cy="2.9" r="2.9" fill="#888"/></svg>
<svg class="r" style="left:870.70px;top:231.60px;overflow:visible" width="5.8" height="5.8" viewBox="0 0 5.8 5.8"><circle cx="2.9" cy="2.9" r="2.9" fill="#888"/></svg>
<div class="r" style="left:172.20px;top:263.20px;width:8.60px;height:8.30px;background:#fff;border:0.8px solid #c9cccf;box-shadow:inset 0 0.5px 1px rgba(0,0,0,.06)"></div>
<div class="t" style="left:188.60px;top:264.06px;font-size:6.900px;color:#1479b0;letter-spacing:0.219px;-webkit-text-stroke:0.16px #1479b0;">(no title)</div>
<div class="t" style="left:216.30px;top:264.06px;font-size:6.900px;color:#555;"> — Draft</div>
<div class="t" style="left:188.60px;top:276.98px;font-size:6.520px;color:#555;">text</div>
<div class="t" style="left:355.00px;top:264.40px;font-size:6.500px;color:#1479b0;">Demo User</div>
<div class="t" style="left:441.60px;top:264.40px;font-size:6.500px;color:#1479b0;letter-spacing:-0.026px;">Uncategorized</div>
<div class="t" style="left:570.50px;top:263.20px;font-size:6.500px;color:#555;">—</div>
<div class="t" style="left:694.90px;top:263.20px;font-size:6.500px;color:#555;">—</div>
<div class="t" style="left:739.00px;top:264.47px;font-size:6.420px;color:#555;">Last Modified</div>
<div class="t" style="left:739.00px;top:273.77px;font-size:6.530px;color:#555;">2017/06/27 12:49:55 pm</div>
<svg class="r" style="left:828.50px;top:261.60px;overflow:visible" width="5.8" height="5.8" viewBox="0 0 5.8 5.8"><circle cx="2.9" cy="2.9" r="2.9" fill="#888"/></svg>
<svg class="r" style="left:870.70px;top:261.60px;overflow:visible" width="5.8" height="5.8" viewBox="0 0 5.8 5.8"><circle cx="2.9" cy="2.9" r="2.9" fill="#888"/></svg>
<div class="r" style="left:172.20px;top:307.60px;width:8.60px;height:8.30px;background:#fff;border:0.8px solid #c9cccf;box-shadow:inset 0 0.5px 1px rgba(0,0,0,.06)"></div>
<div class="t" style="left:188.60px;top:308.46px;font-size:6.900px;color:#1479b0;letter-spacing:0.091px;-webkit-text-stroke:0.16px #1479b0;">Test an</div>
<div class="t" style="left:212.19px;top:308.46px;font-size:6.900px;color:#555;"> — Draft</div>
<div class="t" style="left:188.60px;top:321.38px;font-size:6.520px;color:#555;">This is a test</div>
<div class="t" style="left:355.00px;top:308.80px;font-size:6.500px;color:#1479b0;">Demo User</div>
<div class="t" style="left:441.60px;top:308.80px;font-size:6.500px;color:#1479b0;letter-spacing:-0.026px;">Uncategorized</div>
<div class="t" style="left:570.50px;top:307.60px;font-size:6.500px;color:#555;">—</div>
<div class="t" style="left:694.90px;top:307.60px;font-size:6.500px;color:#555;">—</div>
<div class="t" style="left:739.00px;top:308.87px;font-size:6.420px;color:#555;">Last Modified</div>
<div class="t" style="left:739.00px;top:318.17px;font-size:6.530px;color:#555;">2016/05/20 9:42:48 am</div>
<svg class="r" style="left:828.50px;top:306.00px;overflow:visible" width="5.8" height="5.8" viewBox="0 0 5.8 5.8"><circle cx="2.9" cy="2.9" r="2.9" fill="#888"/></svg>
<svg class="r" style="left:870.70px;top:306.00px;overflow:visible" width="5.8" height="5.8" viewBox="0 0 5.8 5.8"><circle cx="2.9" cy="2.9" r="2.9" fill="#888"/></svg>
<div class="r" style="left:172.20px;top:351.60px;width:8.60px;height:8.30px;background:#fff;border:0.8px solid #c9cccf;box-shadow:inset 0 0.5px 1px rgba(0,0,0,.06)"></div>
<div class="t" style="left:188.60px;top:352.46px;font-size:6.900px;color:#1479b0;letter-spacing:0.207px;-webkit-text-stroke:0.16px #1479b0;">this is a post</div>
<div class="t" style="left:188.60px;top:365.38px;font-size:6.520px;color:#555;">hello this is a new post!!</div>
<div class="t" style="left:355.00px;top:352.80px;font-size:6.500px;color:#1479b0;">Demo User</div>
<div class="t" style="left:441.60px;top:352.80px;font-size:6.500px;color:#1479b0;letter-spacing:-0.026px;">Uncategorized</div>
<div class="t" style="left:570.50px;top:351.60px;font-size:6.500px;color:#555;">—</div>
<div class="t" style="left:694.90px;top:351.60px;font-size:6.500px;color:#555;">—</div>
<div class="t" style="left:739.00px;top:352.87px;font-size:6.420px;color:#555;">Published</div>
<div class="t" style="left:739.00px;top:362.17px;font-size:6.530px;color:#555;">2016/05/20 8:31:52 am</div>
<svg class="r" style="left:828.50px;top:350.00px;overflow:visible" width="5.8" height="5.8" viewBox="0 0 5.8 5.8"><circle cx="2.9" cy="2.9" r="2.9" fill="#888"/></svg>
<svg class="r" style="left:870.70px;top:350.00px;overflow:visible" width="5.8" height="5.8" viewBox="0 0 5.8 5.8"><circle cx="2.9" cy="2.9" r="2.9" fill="#dc3232"/></svg>
<div class="r" style="left:172.20px;top:395.50px;width:8.60px;height:8.30px;background:#fff;border:0.8px solid #c9cccf;box-shadow:inset 0 0.5px 1px rgba(0,0,0,.06)"></div>
<div class="t" style="left:188.60px;top:396.36px;font-size:6.900px;color:#1479b0;letter-spacing:0.148px;-webkit-text-stroke:0.16px #1479b0;">Hello!</div>
<div class="t" style="left:207.78px;top:396.36px;font-size:6.900px;color:#555;"> — Draft</div>
<div class="t" style="left:188.60px;top:409.28px;font-size:6.520px;color:#555;">Welcome to WordPress. Isn’t it Great!</div>
<div class="t" style="left:355.00px;top:396.70px;font-size:6.500px;color:#1479b0;">admin</div>
<div class="t" style="left:441.60px;top:396.70px;font-size:6.500px;color:#1479b0;letter-spacing:-0.026px;">Uncategorized</div>
<div class="t" style="left:570.50px;top:395.50px;font-size:6.500px;color:#555;">—</div>
<div class="t" style="left:694.90px;top:395.50px;font-size:6.500px;color:#555;">—</div>
<div class="t" style="left:739.00px;top:396.77px;font-size:6.420px;color:#555;">Last Modified</div>
<div class="t" style="left:739.00px;top:406.07px;font-size:6.530px;color:#555;">2016/02/05 10:51:25 am</div>
<svg class="r" style="left:828.50px;top:393.90px;overflow:visible" width="5.8" height="5.8" viewBox="0 0 5.8 5.8"><circle cx="2.9" cy="2.9" r="2.9" fill="#888"/></svg>
<svg class="r" style="left:870.70px;top:393.90px;overflow:visible" width="5.8" height="5.8" viewBox="0 0 5.8 5.8"><circle cx="2.9" cy="2.9" r="2.9" fill="#888"/></svg>
<div class="r" style="left:172.20px;top:439.50px;width:8.60px;height:8.30px;background:#fff;border:0.8px solid #c9cccf;box-shadow:inset 0 0.5px 1px rgba(0,0,0,.06)"></div>
<div class="t" style="left:188.60px;top:440.36px;font-size:6.900px;color:#1479b0;letter-spacing:-0.162px;-webkit-text-stroke:0.16px #1479b0;">SnS</div>
<div class="t" style="left:202.12px;top:440.36px;font-size:6.900px;color:#555;"> — Draft, Sticky</div>
<div class="t" style="left:355.00px;top:440.70px;font-size:6.500px;color:#1479b0;">admin</div>
<div class="t" style="left:441.60px;top:440.70px;font-size:6.500px;color:#1479b0;letter-spacing:-0.026px;">Uncategorized</div>
<div class="t" style="left:570.50px;top:439.50px;font-size:6.500px;color:#555;">—</div>
<div class="t" style="left:694.90px;top:439.50px;font-size:6.500px;color:#555;">—</div>
<div class="t" style="left:739.00px;top:440.77px;font-size:6.420px;color:#555;">Last Modified</div>
<svg class="r" style="left:828.50px;top:437.90px;overflow:visible" width="5.8" height="5.8" viewBox="0 0 5.8 5.8"><circle cx="2.9" cy="2.9" r="2.9" fill="#888"/></svg>
<svg class="r" style="left:870.70px;top:437.90px;overflow:visible" width="5.8" height="5.8" viewBox="0 0 5.8 5.8"><circle cx="2.9" cy="2.9" r="2.9" fill="#888"/></svg>
<svg class="r" style="left:336.40px;top:250.30px;overflow:visible" width="6.5" height="10" viewBox="0 0 6.5 10"><path d="M0.5 0.5 L0.5 7.2 L2.1 5.9 L3.4 8.9 L4.6 8.3 L3.4 5.4 L5.6 5.4 Z" fill="#fff" stroke="#222" stroke-width="0.7" stroke-linejoin="round"/></svg>
</body></html>
